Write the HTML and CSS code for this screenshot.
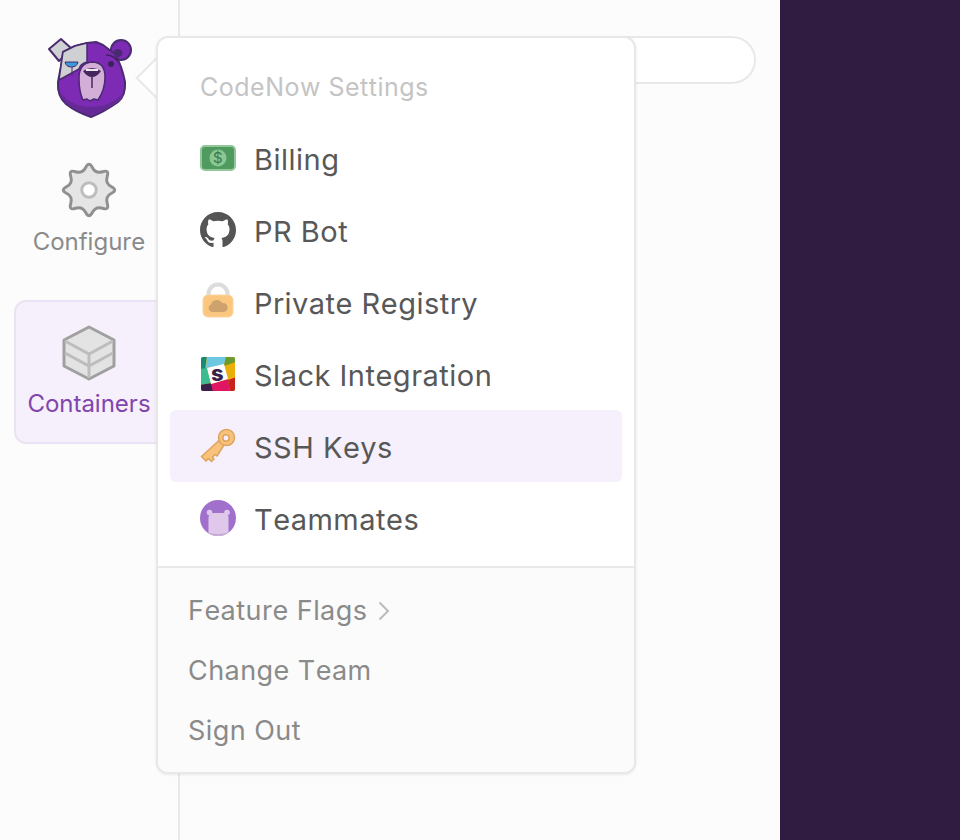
FILE: index.html
```html
<!DOCTYPE html>
<html lang="en">
<head>
<meta charset="utf-8">
<title>CodeNow Settings</title>
<link rel="stylesheet" href="styles.css">
</head>
<body>
<div class="app">
  <nav class="sidebar">
    <svg class="logo" viewBox="47 36 86 84" width="86" height="84">
      <path d="M49 49 L61 39 L72 49 L59 61Z" fill="#cfd0d2" stroke="#4a2a70" stroke-width="2" stroke-linejoin="round"/>
      <circle cx="121" cy="50" r="10" fill="#7d2bb5" stroke="#4a2a70" stroke-width="2"/>
      <ellipse cx="118" cy="53" rx="4.500" ry="4" fill="#4a2a70"/>
      <path d="M63 52 L75 46 L87 43 L96 42 L103 45 L115 54 Q122 66 125 82 Q126 95 118 102 Q104 112 91 117 Q76 112 66 104 Q57 96 58 82 L61 66Z" fill="#7d2bb5" stroke="#4a2a70" stroke-width="2" stroke-linejoin="round"/>
      <path d="M59.500 92 Q72 107 91 107 Q110 107 124 92 Q123 99 118 102 Q104 111 91 116 Q76 111 66 103 Q61 98 59.500 92Z" fill="#662a96"/>
      <path d="M63 52 L75 46 L87 43 V62 Q80 64 79 69 L59 80 L61 66Z" fill="#cfd0d2" stroke="#4a2a70" stroke-width="1.500" stroke-linejoin="round"/>
      <path d="M72 66 V76" stroke="#4a2a70" stroke-width="1"/>
      <path d="M65 62 H78 Q77 67 71.500 67 Q66 67 65 62Z" fill="#3a9bdc" stroke="#4a2a70" stroke-width="1"/>
      <path d="M92 62 Q79 63 79 78 Q79 92 83 100 L87 99 L90 101 L94 99 L98 100 Q105 90 105 77 Q105 62 92 62Z" fill="#d3aed6" stroke="#4a2a70" stroke-width="1.500" stroke-linejoin="round"/>
      <path d="M83 71 Q92 65 101 71 Q97 77 92 77 Q87 77 83 71Z" fill="#45265f"/>
      <path d="M86 70 H98" stroke="#fff" stroke-width="1.800"/>
      <path d="M92 77 V88" stroke="#45265f" stroke-width="1.500"/>
      <circle cx="111" cy="64" r="3" fill="#3d2358"/>
      <path d="M106 55 Q113 55 118 61" fill="none" stroke="#3d2358" stroke-width="1.600"/>
    </svg>
    <a class="tab">
      <svg class="tab-icon" viewBox="-1 -1 58 58" width="56" height="56">
        <path d="M31.450 4.700 Q34.900 11.400 42.050 9.100 Q49.200 6.800 46.900 13.950 Q44.600 21.100 51.300 24.550 Q58 28 51.300 31.450 Q44.600 34.900 46.900 42.050 Q49.200 49.200 42.050 46.900 Q34.900 44.600 31.450 51.300 Q28 58 24.550 51.300 Q21.100 44.600 13.950 46.900 Q6.800 49.200 9.100 42.050 Q11.400 34.900 4.700 31.450 Q-2 28 4.700 24.550 Q11.400 21.100 9.100 13.950 Q6.800 6.800 13.950 9.100 Q21.100 11.400 24.550 4.700 Q28 -2 31.450 4.700Z" fill="#e5e5e5" stroke="#909090" stroke-width="3" stroke-linejoin="round"/>
        <circle cx="28" cy="28" r="7.500" fill="#fff" stroke="#bdbdbd" stroke-width="3"/>
      </svg>
      <span class="tab-label">Configure</span>
    </a>
    <a class="tab tab-active">
      <svg class="tab-icon" viewBox="0 0 56 56" width="56" height="56">
        <path d="M28 2 L53 15 V41 L28 54 L3 41 V15Z" fill="#e3e3e3" stroke="#a0a0a0" stroke-width="3" stroke-linejoin="round"/>
        <path d="M4 16 L28 29 L52 16 M4 28 L28 41 L52 28 M28 29 V53" fill="none" stroke="#bdbdbd" stroke-width="3"/>
      </svg>
      <span class="tab-label">Containers</span>
    </a>
  </nav>
  <main class="content">
    <div class="search"></div>
  </main>
  <aside class="panel"></aside>
</div>

<div class="menu">
  <span class="menu-arrow"></span>
  <div class="menu-body">
    <div class="menu-title">CodeNow Settings</div>
    <ul class="menu-list">
      <li class="menu-item">
        <svg class="item-icon" viewBox="0 0 36 36" width="36" height="36">
          <rect x="1" y="6" width="34" height="24" rx="4" fill="#4f9a5e" stroke="#93c79a" stroke-width="2"/>
          <circle cx="18" cy="18" r="8.500" fill="#8bc795"/>
          <text class="dollar" x="18" y="23" text-anchor="middle">$</text>
        </svg>
        <span class="item-label">Billing</span>
      </li>
      <li class="menu-item">
        <svg class="item-icon" viewBox="0 0 16 16" width="36" height="36">
          <path fill="#555" d="M8 0C3.580 0 0 3.580 0 8c0 3.540 2.290 6.530 5.470 7.590.4.070.55-.17.55-.38 0-.19-.01-.82-.01-1.490-2.010.37-2.530-.49-2.690-.94-.09-.23-.48-.94-.82-1.130-.28-.15-.68-.52-.01-.53.63-.01 1.080.58 1.230.82.720 1.210 1.870.870 2.330.660.070-.52.280-.870.510-1.070-1.780-.2-3.640-.890-3.640-3.950 0-.870.310-1.590.820-2.150-.08-.2-.360-1.020.08-2.120 0 0 .670-.210 2.200.820.640-.18 1.320-.27 2-.27s1.360.09 2 .27c1.530-1.040 2.200-.82 2.200-.82.440 1.100.160 1.920.080 2.120.510.560.820 1.270.820 2.150 0 3.070-1.870 3.750-3.650 3.950.290.250.540.730.540 1.480 0 1.070-.01 1.930-.01 2.200 0 .210.150.460.550.380A8.010 8.010 0 0 0 16 8c0-4.420-3.580-8-8-8z"/>
        </svg>
        <span class="item-label">PR Bot</span>
      </li>
      <li class="menu-item">
        <svg class="item-icon" viewBox="0 0 36 36" width="36" height="36">
          <path d="M8.500 13 V10 a9.500 9.500 0 0 1 19 0 V13" fill="none" stroke="#dcdcdc" stroke-width="4"/>
          <rect x="3" y="11" width="30" height="22" rx="5" fill="#fbc77f" stroke="#f7d5a0" stroke-width="1"/>
          <path d="M12 28 a4 4 0 0 1 -1-7.600 a6 6 0 0 1 11-1.400 a4.500 4.500 0 0 1 2 9Z" fill="#cda26e"/>
        </svg>
        <span class="item-label">Private Registry</span>
      </li>
      <li class="menu-item">
        <svg class="item-icon" viewBox="0 0 36 36" width="36" height="36">
          <defs><clipPath id="slack-clip"><rect x="1" y="1" width="34" height="34" rx="2"/></clipPath></defs>
          <g clip-path="url(#slack-clip)">
            <rect x="1" y="1" width="34" height="34" fill="#eaae0d"/>
            <path d="M0 0 H7 L5 14 L0 14Z" fill="#138d75"/>
            <path d="M7 0 H26 L24 9 L6 12Z" fill="#6cc7e0"/>
            <path d="M26 0 H36 V6 L24 10Z" fill="#6d9a2c"/>
            <path d="M0 13 L7 12 L11 27 L0 29Z" fill="#3abc90"/>
            <path d="M0 29 L12 27 L14 36 H0Z" fill="#3a1f4a"/>
            <path d="M11 28 L28 23 L30 36 H13Z" fill="#e01563"/>
            <path d="M28 24 L36 21 V36 H30Z" fill="#c9211e"/>
            <path d="M7 12 L24 8 L28 23 L11 28Z" fill="#fff"/>
          </g>
          <text class="slack-s" x="17.500" y="25" text-anchor="middle">s</text>
        </svg>
        <span class="item-label">Slack Integration</span>
      </li>
      <li class="menu-item menu-item-active">
        <svg class="item-icon" viewBox="0 0 36 36" width="36" height="36">
          <path d="M19.500 12 L1.500 28.500 L6 33 L8.500 30.500 L11.500 33.500 L14 31 L12.500 29 L15 26.500 L17 28 L24 17Z" fill="#f8c27a" stroke="#dea35f" stroke-width="1.500" stroke-linejoin="round"/>
          <circle cx="26.500" cy="9.500" r="8" fill="#f8c27a" stroke="#dea35f" stroke-width="1.500"/>
          <circle cx="26" cy="10" r="3.200" fill="#f5f0fb" stroke="#dea35f" stroke-width="1.500"/>
        </svg>
        <span class="item-label">SSH Keys</span>
      </li>
      <li class="menu-item">
        <svg class="item-icon" viewBox="0 0 36 36" width="36" height="36">
          <defs><clipPath id="mate-clip"><circle cx="18" cy="18" r="18"/></clipPath></defs>
          <circle cx="18" cy="18" r="18" fill="#a070cc"/>
          <g clip-path="url(#mate-clip)">
            <circle cx="9.500" cy="12.500" r="2.800" fill="#e0c8ea"/>
            <circle cx="27" cy="12.500" r="2.800" fill="#e0c8ea"/>
            <path d="M8.500 18 Q8.500 13 14 13 H23 Q28.500 13 28.500 18 V36 H8.500Z" fill="#e0c8ea"/>
            <path d="M6 32 Q18 36 30 32 V36 H6Z" fill="#c4add3"/>
          </g>
        </svg>
        <span class="item-label">Teammates</span>
      </li>
    </ul>
    <ul class="menu-footer">
      <li class="footer-item">
        <span>Feature Flags</span>
        <svg class="chevron" viewBox="0 0 12 20" width="12" height="20"><path d="M1.500 1.500 L10 10 L1.500 18.500" fill="none" stroke="#bbb" stroke-width="2"/></svg>
      </li>
      <li class="footer-item"><span>Change Team</span></li>
      <li class="footer-item"><span>Sign Out</span></li>
    </ul>
  </div>
</div>
</body>
</html>
```
FILE: styles.css
```css
* { box-sizing: border-box; }
html, body { margin: 0; padding: 0; height: 100%; }
body { font-family: Inter, "Noto Sans", sans-serif; font-kerning: none; background: #fcfcfc; overflow: hidden; }
ul { list-style: none; margin: 0; padding: 0; }

.app { display: flex; height: 840px; }

.sidebar {
  width: 180px;
  flex: none;
  border-right: 2px solid #e8e8e8;
  display: flex;
  flex-direction: column;
  align-items: flex-start;
  padding: 36px 0 0 14px;
  overflow: hidden;
}
.logo { display: block; margin: 0 0 0 33px; }
.tab {
  width: 150px;
  margin-top: 42px;
  display: flex;
  flex-direction: column;
  align-items: center;
  gap: 9px;
}
.tab-label { font-size: 24px; line-height: 30px; font-weight: 420; color: #8a8a8a; white-space: nowrap; }
.tab-active {
  width: 170px;
  height: 144px;
  margin-top: 43px;
  padding: 23px 20px 0 0;
  gap: 8px;
  background: #f5f0fb;
  border: 2px solid #ece2f5;
  border-radius: 12px;
}
.tab-active .tab-label { color: #8145ad; }

.content { width: 600px; flex: none; padding: 36px 24px 0 0; }
.search {
  height: 48px;
  background: #fff;
  border: 2px solid #e8e8e8;
  border-radius: 24px;
}
.panel { flex: 1; background: #301c41; }

.menu {
  position: absolute;
  left: 156px;
  top: 36px;
  width: 480px;
  height: 738px;
}
.menu-arrow {
  position: absolute;
  left: -14px;
  top: 26px;
  width: 32px;
  height: 32px;
  background: #fff;
  border-left: 2px solid #e8e8e8;
  border-bottom: 2px solid #e8e8e8;
  transform: rotate(45deg);
}
.menu-body {
  position: relative;
  height: 100%;
  background: #fff;
  border: 2px solid #e8e8e8;
  border-radius: 12px;
  display: flex;
  flex-direction: column;
  overflow: hidden;
  box-shadow: 0 1px 3px rgba(0, 0, 0, .08);
}
.menu-title {
  height: 84px;
  padding: 32px 0 0 42px;
  font-size: 25px;
  line-height: 34px;
  letter-spacing: .5px;
  color: #c4c4c4;
}
.menu-list { padding: 0 12px; height: 444px; }
.menu-item {
  height: 72px;
  display: flex;
  align-items: center;
  gap: 18px;
  padding-left: 30px;
  border-radius: 6px;
  font-size: 29px;
  letter-spacing: .5px;
  color: #585858;
}
.item-label { padding-top: 2px; }
.menu-item-active { background: #f5f0fb; }
.item-icon { flex: none; display: block; overflow: visible; }
.dollar { font: 400 15px Inter, sans-serif; fill: #3c7a49; }
.slack-s { font: 800 22px Inter, sans-serif; fill: #3a1f4a; }
.menu-footer {
  flex: 1;
  border-top: 2px solid #e8e8e8;
  background: #fbfbfb;
  padding-top: 12px;
}
.footer-item {
  height: 60px;
  display: flex;
  align-items: center;
  gap: 11px;
  padding-left: 30px;
  font-size: 27px;
  letter-spacing: .45px;
  color: #8a8a8a;
}
.chevron { flex: none; display: block; margin-top: 2px; }
```
